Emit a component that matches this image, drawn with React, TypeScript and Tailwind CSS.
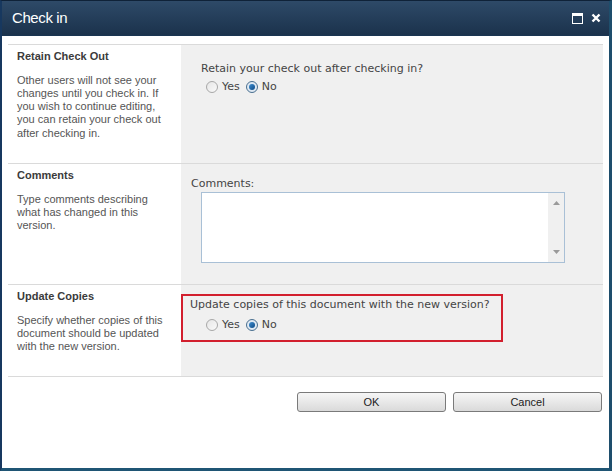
import type { ReactNode } from 'react';

const body = "font-['DejaVu_Sans',Verdana,sans-serif]";
const ui = "font-['Liberation_Sans',Tahoma,Arial,sans-serif]";

function Radio({ checked }: { checked?: boolean }) {
  return (
    <span
      className={`inline-flex h-[12px] w-[12px] shrink-0 items-center justify-center rounded-full border ${
        checked ? 'border-[#4a6f8f] bg-[#dfe9f3]' : 'border-[#a8a8a8] bg-gradient-to-br from-[#e6e6e6] to-[#fafafa]'
      }`}
    >
      {checked && <span className="h-[6px] w-[6px] rounded-full bg-gradient-to-br from-[#3f8fd0] to-[#0d4a86]" />}
    </span>
  );
}

function YesNo({ className = '' }: { className?: string }) {
  return (
    <div className={`flex h-[14px] items-center text-[11px] leading-[14px] text-[#444] ${body} ${className}`}>
      <Radio />
      <span className="ml-[4px]">Yes</span>
      <span className="ml-[6px] flex"><Radio checked /></span>
      <span className="ml-[4px]">No</span>
    </div>
  );
}

function Section({ title, desc, height, children }: { title: string; desc: string[]; height: string; children: ReactNode }) {
  return (
    <div className={`flex border-t border-[#dadada] ${height}`}>
      <div className="w-[173px] shrink-0 bg-white pl-[9px] pt-[3px]">
        <div className={`text-[11px] font-bold text-[#3b3b3b] ${ui}`}>{title}</div>
        <div className={`mt-[9px] text-[11px] leading-[13.3px] text-[#555] ${ui}`}>
          {desc.map((l) => <div key={l}>{l}</div>)}
        </div>
      </div>
      <div className="flex-1 bg-[#f0f0f0]">{children}</div>
    </div>
  );
}

function Button({ label }: { label: string }) {
  return (
    <button className={`h-[20px] w-[149px] rounded-[3px] border border-[#7a7a7a] bg-gradient-to-b from-[#f6f6f6] to-[#dadada] text-[11px] text-[#222] ${ui}`}>
      {label}
    </button>
  );
}

export default function App() {
  return (
    <div className="flex h-[471px] w-[612px] flex-col border-b-[3px] border-l-[2px] border-r-[3px] border-t border-b-[#1f5574] border-l-[#17385f] border-r-[#1e4e6c] border-t-[#0f2238] bg-white">
      <div className="flex h-[35px] shrink-0 items-center justify-between border-b border-[#1a3552] bg-gradient-to-b from-[#2e4a68] to-[#1b324c] pl-[10px] pr-[8px]">
        <span className={`text-[15px] tracking-[-0.4px] text-white ${ui}`}>Check in</span>
        <div className="flex items-center gap-[8px]">
          <svg width="11" height="11" viewBox="0 0 11 11">
            <rect x="0.5" y="0.5" width="10" height="10" fill="none" stroke="#fff" />
            <rect x="1" y="1" width="9" height="2" fill="#fff" />
          </svg>
          <svg width="10" height="10" viewBox="0 0 10 10">
            <path d="M1.5 1.5 L8.5 8.5 M8.5 1.5 L1.5 8.5" stroke="#fff" strokeWidth="2.4" />
          </svg>
        </div>
      </div>

      <div className="flex flex-1 flex-col pl-[6px] pr-[6px] pt-[8px]">
        <Section
          title="Retain Check Out"
          height="h-[119px]"
          desc={['Other users will not see your', 'changes until you check in. If', 'you wish to continue editing,', 'you can retain your check out', 'after checking in.']}
        >
          <div className="pl-[20px] pt-[17px]">
            <div className={`text-[11px] leading-[14px] text-[#444] ${body}`}>Retain your check out after checking in?</div>
            <YesNo className="mt-[4px] pl-[5px]" />
          </div>
        </Section>

        <Section
          title="Comments"
          height="h-[121px]"
          desc={['Type comments describing', 'what has changed in this', 'version.']}
        >
          <div className="pl-[10px] pt-[13px]">
            <div className={`text-[11px] leading-[14px] text-[#444] ${body}`}>Comments:</div>
            <div className="ml-[10px] mt-[1px] flex h-[71px] w-[364px] border border-[#a9c0d6] bg-white">
              <div className="flex-1" />
              <div className="flex w-[16px] flex-col items-center justify-between bg-[#f0f0f0] py-[8px]">
                <svg width="7" height="4" viewBox="0 0 7 4"><path d="M0 4 L3.5 0 L7 4Z" fill="#9a9a9a" /></svg>
                <svg width="7" height="4" viewBox="0 0 7 4"><path d="M0 0 L3.5 4 L7 0Z" fill="#9a9a9a" /></svg>
              </div>
            </div>
          </div>
        </Section>

        <Section
          title="Update Copies"
          height="h-[92px]"
          desc={['Specify whether copies of this', 'document should be updated', 'with the new version.']}
        >
          <div className="mt-[9px] h-[48px] w-[322px] border-2 border-[#d21f2e] pl-[7px] pt-[2px]">
            <div className={`text-[11px] leading-[14px] text-[#444] ${body}`}>Update copies of this document with the new version?</div>
            <YesNo className="mt-[6px] pl-[16px]" />
          </div>
        </Section>

        <div className="border-t border-[#dadada]" />
        <div className="mt-[15px] flex justify-end gap-[7px] pr-[1px]">
          <Button label="OK" />
          <Button label="Cancel" />
        </div>
      </div>
    </div>
  );
}
